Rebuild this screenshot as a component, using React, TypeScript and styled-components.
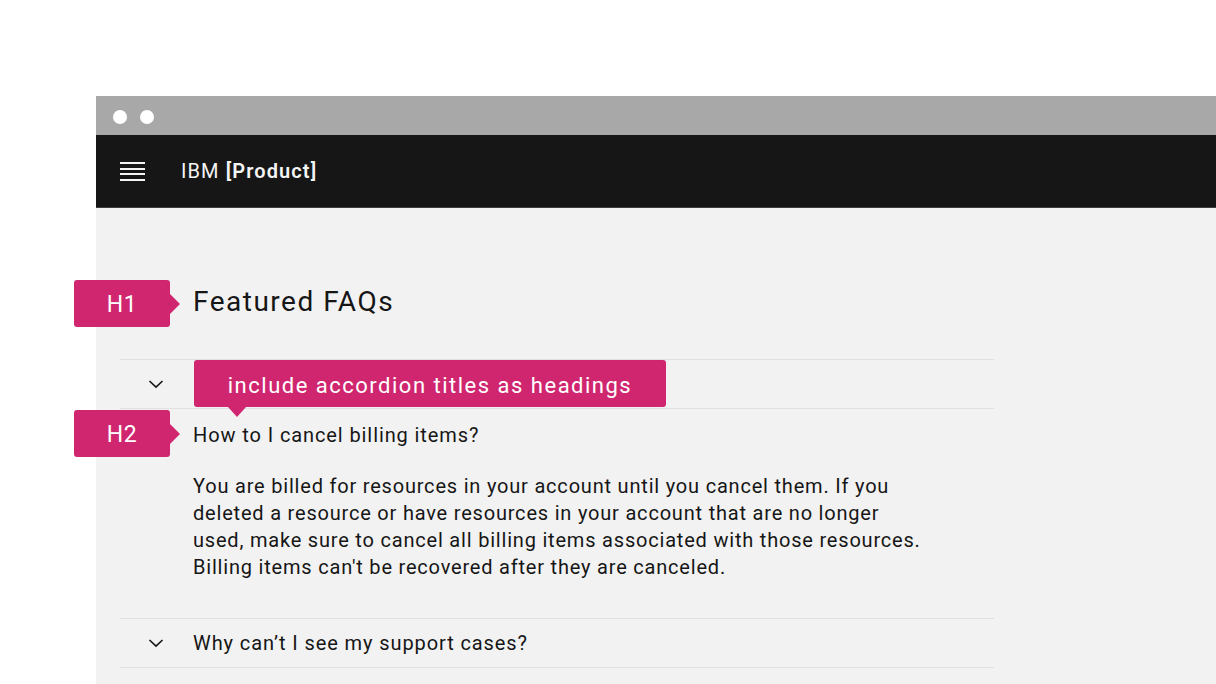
import React from "react";
import styled, { createGlobalStyle } from "styled-components";

const MAGENTA = "#d02670";
const FONT = `"Roboto", "Liberation Sans", sans-serif`;

const GlobalStyle = createGlobalStyle`
  html, body {
    margin: 0;
    padding: 0;
    background: #ffffff;
    font-family: ${FONT};
  }
  * {
    box-sizing: border-box;
  }
`;

const Page = styled.div`
  height: 684px;
  overflow: hidden;
  padding: 96px 0 0 96px;
`;

const Window = styled.div`
  display: flex;
  flex-direction: column;
  height: 588px;
`;

const TitleBar = styled.div`
  height: 39px;
  flex-shrink: 0;
  display: flex;
  align-items: center;
  gap: 13px;
  padding: 3px 0 0 17px;
  background: #a8a8a8;
`;

const Dot = styled.span`
  width: 14px;
  height: 14px;
  border-radius: 50%;
  background: #ffffff;
`;

const Header = styled.header`
  height: 73px;
  flex-shrink: 0;
  display: flex;
  align-items: center;
  background: #161616;
  border-bottom: 1px solid #3d3d3d;
  padding-left: 24px;
`;

const Menu = styled.div`
  width: 25px;
  display: flex;
  flex-direction: column;
  gap: 3.6px;
  margin-top: 1px;
`;

const MenuLine = styled.span`
  height: 2px;
  background: #f4f4f4;
`;

const ProductName = styled.div`
  margin-left: 36px;
  color: #f4f4f4;
  font-size: 20px;
  letter-spacing: 1.1px;

  strong {
    font-weight: 600;
  }
`;

const Content = styled.main`
  flex: 1;
  background: #f2f2f2;
  padding: 76px 0 0 24px;
`;

const Title = styled.h1`
  position: relative;
  margin: 0 0 39px 73px;
  font-size: 28px;
  line-height: 36px;
  font-weight: 400;
  letter-spacing: 1.5px;
  color: #161616;
`;

const Tag = styled.span<{ $top: number }>`
  position: absolute;
  left: -119px;
  top: ${(p) => p.$top}px;
  width: 96px;
  height: 47px;
  display: flex;
  align-items: center;
  justify-content: center;
  padding-top: 2px;
  border-radius: 3px;
  background: ${MAGENTA};
  color: #ffffff;
  font-size: 23px;
  font-weight: 400;
  letter-spacing: 0.5px;
  line-height: 1;

  &::after {
    content: "";
    position: absolute;
    right: -10px;
    top: 50%;
    margin-top: -10px;
    border-top: 10px solid transparent;
    border-bottom: 10px solid transparent;
    border-left: 10px solid ${MAGENTA};
  }
`;

const Accordion = styled.div`
  width: 874px;
`;

const Row = styled.div<{ $last?: boolean }>`
  position: relative;
  height: ${(p) => (p.$last ? 50 : 49)}px;
  display: flex;
  align-items: center;
  border-top: 1px solid #e0e0e0;
  border-bottom: ${(p) => (p.$last ? "1px solid #e0e0e0" : "none")};
  padding-left: 28px;
  color: #161616;
  font-size: 20px;
  letter-spacing: 0.9px;
`;

const Chevron = styled.svg`
  width: 16px;
  height: 16px;
  margin-right: 29px;
  flex-shrink: 0;
`;

const Panel = styled.section`
  border-top: 1px solid #e0e0e0;
  padding: 12px 0 37px 73px;
  color: #161616;
`;

const PanelTitle = styled.h2`
  position: relative;
  margin: 0 0 24px;
  font-size: 20px;
  line-height: 28px;
  font-weight: 400;
  letter-spacing: 0.9px;
`;

const Body = styled.p`
  margin: 0;
  font-size: 20px;
  line-height: 27px;
  letter-spacing: 0.8px;
`;

const Callout = styled.div`
  position: absolute;
  left: 74px;
  top: 0;
  width: 472px;
  height: 47px;
  display: flex;
  align-items: center;
  justify-content: center;
  padding-top: 4px;
  border-radius: 3px;
  background: ${MAGENTA};
  color: #ffffff;
  font-size: 22px;
  letter-spacing: 1.5px;
  z-index: 2;

  &::after {
    content: "";
    position: absolute;
    left: 34px;
    bottom: -10px;
    border-left: 9.5px solid transparent;
    border-right: 9.5px solid transparent;
    border-top: 10px solid ${MAGENTA};
  }
`;

function ChevronDown() {
  return (
    <Chevron viewBox="0 0 16 16" fill="none">
      <path d="M1.5 5 L8 11.2 L14.5 5" stroke="#161616" strokeWidth="1.6" />
    </Chevron>
  );
}

export default function App() {
  return (
    <>
      <GlobalStyle />
      <Page>
        <Window>
          <TitleBar>
            <Dot />
            <Dot />
          </TitleBar>
          <Header>
            <Menu>
              <MenuLine />
              <MenuLine />
              <MenuLine />
              <MenuLine />
            </Menu>
            <ProductName>
              IBM <strong>[Product]</strong>
            </ProductName>
          </Header>
          <Content>
            <Title>
              <Tag $top={-4}>H1</Tag>
              Featured FAQs
            </Title>
            <Accordion>
              <Row>
                <ChevronDown />
                <Callout>include accordion titles as headings</Callout>
              </Row>
              <Panel>
                <PanelTitle>
                  <Tag $top={-11}>H2</Tag>
                  How to I cancel billing items?
                </PanelTitle>
                <Body>
                  You are billed for resources in your account until you cancel them. If you
                  <br />
                  deleted a resource or have resources in your account that are no longer
                  <br />
                  used, make sure to cancel all billing items associated with those resources.
                  <br />
                  Billing items can't be recovered after they are canceled.
                </Body>
              </Panel>
              <Row $last>
                <ChevronDown />
                Why can’t I see my support cases?
              </Row>
            </Accordion>
          </Content>
        </Window>
      </Page>
    </>
  );
}
